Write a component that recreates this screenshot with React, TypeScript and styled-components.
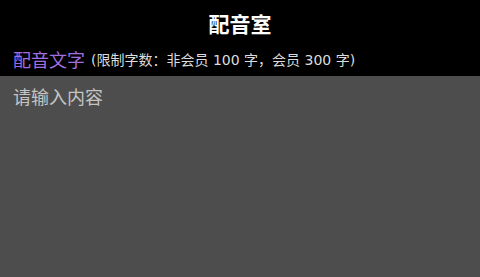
import React from "react";
import styled, { createGlobalStyle } from "styled-components";

const Global = createGlobalStyle`
  html, body { margin: 0; padding: 0; background: #000; }
  body { font-family: "DejaVu Sans", "Noto Sans CJK SC", sans-serif; }
  #root { height: 277px; }
`;

const Page = styled.div`
  display: flex;
  flex-direction: column;
  height: 277px;
  background: #000;
`;

const TitleBar = styled.header`
  height: 46px;
  display: flex;
  align-items: center;
  justify-content: center;
  color: #fff;
  font-size: 21px;
  font-weight: 700;
  box-sizing: border-box;
`;

const LabelRow = styled.div`
  height: 30px;
  display: flex;
  align-items: center;
  padding: 0 13px 5px;
  box-sizing: border-box;
  gap: 6px;
`;

const Label = styled.span`
  color: #a06ee0;
  font-size: 18px;
`;

const Hint = styled.span`
  color: #dcdcdc;
  font-size: 14px;
`;

const Input = styled.textarea`
  flex: 1;
  border: none;
  outline: none;
  resize: none;
  background: #4d4d4d;
  color: #eee;
  font-family: "DejaVu Sans", "Noto Sans CJK SC", sans-serif;
  font-size: 18px;
  line-height: 24px;
  padding: 10px 13px;
  margin: 0;
  &::placeholder {
    color: #c4c4c4;
  }
`;

export default function App() {
  return (
    <>
      <Global />
      <Page>
        <TitleBar>配音室</TitleBar>
        <LabelRow>
          <Label>配音文字</Label>
          <Hint>(限制字数：非会员 100 字，会员 300 字)</Hint>
        </LabelRow>
        <Input placeholder="请输入内容" />
      </Page>
    </>
  );
}
